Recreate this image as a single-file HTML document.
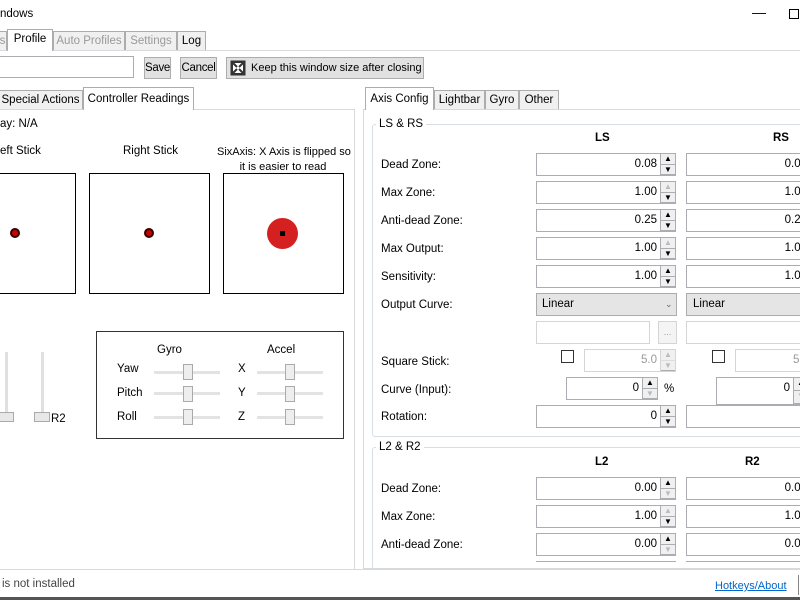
<!DOCTYPE html>
<html><head><meta charset="utf-8"><style>
*{box-sizing:border-box;margin:0;padding:0}
body{width:800px;height:600px;overflow:hidden;background:#fff;font-family:"Liberation Sans",sans-serif;font-size:11.5px;color:#000;position:relative}
.a{position:absolute}
.t{position:absolute;white-space:nowrap}
.tab{position:absolute;border:1px solid #acacac;border-bottom:none;background:#f0f0f0;text-align:center;line-height:19px;white-space:nowrap;overflow:hidden}
.sel{background:#fff;z-index:2}
.btn{position:absolute;border:1px solid #adadad;background:#e1e1e1;text-align:center;line-height:20px;white-space:nowrap;overflow:hidden}
.in{position:absolute;border:1px solid #abadb3;background:#fff;text-align:right;padding-right:3px;line-height:21px;white-space:nowrap;overflow:hidden}
.sp{position:absolute;width:16px;border:1px solid #abadb3;background:#f0f0f0}
.sp i{display:block;height:50%;border-bottom:1px solid #abadb3;font-style:normal;font-size:8px;line-height:10px;text-align:center}
.dis{color:#999}
.box{position:absolute;border:1px solid #000}
</style></head><body>
<div class="t" style="left:0;top:8px">ndows</div>
<div class="t" style="left:752px;top:4px;font-size:14px">—</div>
<div class="a" style="left:789px;top:9px;width:10px;height:10px;border:1px solid #000"></div>

<div class="a" style="left:0;top:50px;width:800px;height:1px;background:#d9d9d9"></div>
<div class="tab dis" style="left:-2px;top:31px;width:9px;height:19px">s</div>
<div class="tab sel" style="left:7px;top:29px;width:46px;height:22px">Profile</div>
<div class="tab dis" style="left:53px;top:31px;width:72px;height:19px">Auto Profiles</div>
<div class="tab dis" style="left:125px;top:31px;width:52px;height:19px">Settings</div>
<div class="tab" style="left:177px;top:31px;width:29px;height:19px">Log</div>

<div class="in" style="left:-2px;top:56px;width:136px;height:22px"></div>
<div class="btn" style="left:144px;top:57px;width:27px;height:22px;letter-spacing:-0.3px">Save</div>
<div class="btn" style="left:180px;top:57px;width:37px;height:22px;letter-spacing:-0.3px">Cancel</div>
<div class="btn" style="left:226px;top:57px;width:198px;height:22px;text-align:left;padding-left:24px;font-size:11px">Keep this window size after closing
<svg class="a" style="left:3px;top:2px" width="16" height="16"><rect x="0.5" y="0.5" width="15" height="15" fill="#333"/><rect x="3" y="3" width="10" height="10" fill="#fff"/><path d="M3 3l4 4M13 3l-4 4M3 13l4-4M13 13l-4-4" stroke="#333" stroke-width="2"/></svg></div>

<!-- left panel -->
<div class="a" style="left:-2px;top:109px;width:357px;height:462px;border:1px solid #d9d9d9"></div>
<div class="tab" style="left:-2px;top:90px;width:85px;height:19px">Special Actions</div>
<div class="tab sel" style="left:83px;top:87px;width:111px;height:23px;line-height:22px">Controller Readings</div>
<div class="t" style="left:0;top:118px">ay: N/A</div>
<div class="t" style="left:0;top:145px">eft Stick</div>
<div class="t" style="left:123px;top:145px">Right Stick</div>
<div class="t" style="left:217px;top:145px;width:132px;text-align:center;line-height:15px;font-size:11px">SixAxis: X Axis is flipped so<br>it is easier to read</div>
<div class="box" style="left:-2px;top:173px;width:78px;height:121px"></div>
<div class="box" style="left:89px;top:173px;width:121px;height:121px"></div>
<div class="box" style="left:223px;top:173px;width:121px;height:121px"></div>
<div class="a" style="left:10px;top:228px;width:10px;height:10px;border-radius:50%;background:#c00;border:2.5px solid #300"></div>
<div class="a" style="left:144px;top:228px;width:10px;height:10px;border-radius:50%;background:#c00;border:2.5px solid #300"></div>
<div class="a" style="left:267px;top:218px;width:31px;height:31px;border-radius:50%;background:#d42020"></div>
<div class="a" style="left:280px;top:231px;width:5px;height:5px;background:#000"></div>

<div class="a" style="left:5px;top:352px;width:3px;height:66px;background:#e0e0e0"></div>
<div class="a" style="left:-2px;top:412px;width:16px;height:10px;background:#e8e8e8;border:1px solid #aaa"></div>
<div class="a" style="left:41px;top:352px;width:3px;height:66px;background:#e0e0e0"></div>
<div class="a" style="left:34px;top:412px;width:16px;height:10px;background:#e8e8e8;border:1px solid #aaa"></div>
<div class="t" style="left:51px;top:413px">R2</div>

<div class="a" style="left:96px;top:331px;width:248px;height:108px;border:1.5px solid #333"></div>
<div class="t" style="left:157px;top:344px">Gyro</div>
<div class="t" style="left:267px;top:344px">Accel</div>
<div class="t" style="left:117px;top:363px">Yaw</div>
<div class="t" style="left:117px;top:387px">Pitch</div>
<div class="t" style="left:117px;top:411px">Roll</div>
<div class="t" style="left:238px;top:363px">X</div>
<div class="t" style="left:238px;top:387px">Y</div>
<div class="t" style="left:238px;top:411px">Z</div>
<div class="a" style="left:154px;top:371px;width:66px;height:3px;background:#e3e3e3"></div>
<div class="a" style="left:154px;top:392px;width:66px;height:3px;background:#e3e3e3"></div>
<div class="a" style="left:154px;top:416px;width:66px;height:3px;background:#e3e3e3"></div>
<div class="a" style="left:257px;top:371px;width:66px;height:3px;background:#e3e3e3"></div>
<div class="a" style="left:257px;top:392px;width:66px;height:3px;background:#e3e3e3"></div>
<div class="a" style="left:257px;top:416px;width:66px;height:3px;background:#e3e3e3"></div>
<div class="a" style="left:183px;top:364px;width:10px;height:16px;background:#eee;border:1px solid #aaa"></div>
<div class="a" style="left:183px;top:386px;width:10px;height:16px;background:#eee;border:1px solid #aaa"></div>
<div class="a" style="left:183px;top:409px;width:10px;height:16px;background:#eee;border:1px solid #aaa"></div>
<div class="a" style="left:285px;top:364px;width:10px;height:16px;background:#eee;border:1px solid #aaa"></div>
<div class="a" style="left:285px;top:386px;width:10px;height:16px;background:#eee;border:1px solid #aaa"></div>
<div class="a" style="left:285px;top:409px;width:10px;height:16px;background:#eee;border:1px solid #aaa"></div>

<!-- right panel -->
<div class="a" style="left:363px;top:109px;width:440px;height:460px;border:1px solid #d9d9d9"></div>
<div class="tab sel" style="left:365px;top:87px;width:69px;height:23px;line-height:22px">Axis Config</div>
<div class="tab" style="left:434px;top:90px;width:51px;height:19px">Lightbar</div>
<div class="tab" style="left:485px;top:90px;width:34px;height:19px">Gyro</div>
<div class="tab" style="left:519px;top:90px;width:40px;height:19px">Other</div>

<div class="a" style="left:372px;top:124px;width:430px;height:313px;border:1px solid #d5dfe5;border-radius:3px"></div>
<div class="t" style="left:376px;top:118px;background:#fff;padding:0 3px">LS &amp; RS</div>
<div class="t" style="left:595px;top:132px;font-weight:bold">LS</div>
<div class="t" style="left:773px;top:132px;font-weight:bold">RS</div>

<div class="t" style="left:381px;top:159px">Dead Zone:</div>
<div class="t" style="left:381px;top:187px">Max Zone:</div>
<div class="t" style="left:381px;top:215px">Anti-dead Zone:</div>
<div class="t" style="left:381px;top:243px">Max Output:</div>
<div class="t" style="left:381px;top:271px">Sensitivity:</div>
<div class="t" style="left:381px;top:299px">Output Curve:</div>
<div class="t" style="left:381px;top:356px">Square Stick:</div>
<div class="t" style="left:381px;top:384px">Curve (Input):</div>
<div class="t" style="left:381px;top:411px">Rotation:</div>

<div class="in" style="left:536px;top:153px;width:125px;height:23px">0.08</div><div class="sp" style="left:660px;top:153px;height:23px"><i>▲</i><i>▼</i></div>
<div class="in" style="left:536px;top:181px;width:125px;height:23px">1.00</div><div class="sp" style="left:660px;top:181px;height:23px"><i style="color:#bbb">▲</i><i>▼</i></div>
<div class="in" style="left:536px;top:209px;width:125px;height:23px">0.25</div><div class="sp" style="left:660px;top:209px;height:23px"><i>▲</i><i>▼</i></div>
<div class="in" style="left:536px;top:237px;width:125px;height:23px">1.00</div><div class="sp" style="left:660px;top:237px;height:23px"><i style="color:#bbb">▲</i><i>▼</i></div>
<div class="in" style="left:536px;top:265px;width:125px;height:23px">1.00</div><div class="sp" style="left:660px;top:265px;height:23px"><i>▲</i><i>▼</i></div>
<div class="in" style="left:686px;top:153px;width:125px;height:23px">0.08</div>
<div class="in" style="left:686px;top:181px;width:125px;height:23px">1.00</div>
<div class="in" style="left:686px;top:209px;width:125px;height:23px">0.25</div>
<div class="in" style="left:686px;top:237px;width:125px;height:23px">1.00</div>
<div class="in" style="left:686px;top:265px;width:125px;height:23px">1.00</div>

<div class="btn" style="left:536px;top:293px;width:141px;height:23px;text-align:left;padding-left:5px;background:#e5e5e5;border-color:#acacac">Linear<span class="a" style="left:128px;top:0;font-size:9px;color:#666">⌄</span></div>
<div class="btn" style="left:686px;top:293px;width:120px;height:23px;text-align:left;padding-left:6px;background:#e5e5e5;border-color:#acacac">Linear</div>
<div class="in" style="left:536px;top:321px;width:114px;height:23px;border-color:#d5d5d5"></div>
<div class="a" style="left:658px;top:321px;width:19px;height:23px;border:1px solid #d5d5d5;background:#f4f4f4;color:#999;font-size:9px;text-align:center;line-height:20px">...</div>
<div class="in" style="left:686px;top:321px;width:120px;height:23px;border-color:#d5d5d5"></div>

<div class="a" style="left:561px;top:350px;width:13px;height:13px;border:1px solid #333"></div>
<div class="in dis" style="left:584px;top:349px;width:77px;height:23px;border-color:#d5d5d5">5.0</div><div class="sp" style="left:660px;top:349px;height:23px;border-color:#d5d5d5;color:#bbb"><i style="border-color:#ddd">▲</i><i>▼</i></div>
<div class="a" style="left:712px;top:350px;width:13px;height:13px;border:1px solid #333"></div>
<div class="in dis" style="left:735px;top:349px;width:78px;height:23px;border-color:#d5d5d5">5.0</div>

<div class="in" style="left:566px;top:377px;width:77px;height:23px">0</div><div class="sp" style="left:642px;top:377px;height:23px"><i>▲</i><i style="color:#bbb">▼</i></div>
<div class="t" style="left:664px;top:383px">%</div>
<div class="in" style="left:716px;top:377px;width:78px;height:28px">0</div><div class="sp" style="left:793px;top:377px;height:28px"><i>▲</i><i style="color:#bbb">▼</i></div>
<div class="in" style="left:536px;top:405px;width:125px;height:23px">0</div><div class="sp" style="left:660px;top:405px;height:23px"><i>▲</i><i>▼</i></div>
<div class="in" style="left:686px;top:405px;width:120px;height:23px"></div>

<div class="a" style="left:372px;top:447px;width:430px;height:130px;border:1px solid #d5dfe5;border-radius:3px"></div>
<div class="t" style="left:376px;top:441px;background:#fff;padding:0 3px">L2 &amp; R2</div>
<div class="t" style="left:595px;top:456px;font-weight:bold">L2</div>
<div class="t" style="left:745px;top:456px;font-weight:bold">R2</div>
<div class="t" style="left:381px;top:483px">Dead Zone:</div>
<div class="t" style="left:381px;top:511px">Max Zone:</div>
<div class="t" style="left:381px;top:539px">Anti-dead Zone:</div>
<div class="in" style="left:536px;top:477px;width:125px;height:23px">0.00</div><div class="sp" style="left:660px;top:477px;height:23px"><i>▲</i><i style="color:#bbb">▼</i></div>
<div class="in" style="left:536px;top:505px;width:125px;height:23px">1.00</div><div class="sp" style="left:660px;top:505px;height:23px"><i style="color:#bbb">▲</i><i>▼</i></div>
<div class="in" style="left:536px;top:533px;width:125px;height:23px">0.00</div><div class="sp" style="left:660px;top:533px;height:23px"><i>▲</i><i style="color:#bbb">▼</i></div>
<div class="in" style="left:686px;top:477px;width:125px;height:23px">0.00</div>
<div class="in" style="left:686px;top:505px;width:125px;height:23px">1.00</div>
<div class="in" style="left:686px;top:533px;width:125px;height:23px">0.00</div>
<div class="a" style="left:536px;top:561px;width:140px;height:1px;background:#abadb3"></div>
<div class="a" style="left:686px;top:561px;width:120px;height:1px;background:#abadb3"></div>

<!-- status -->
<div class="a" style="left:0;top:569px;width:800px;height:31px;background:#fff;border-top:1px solid #d9d9d9;z-index:5"></div>
<div class="t" style="left:2px;top:578px;z-index:6;color:#444">is not installed</div>
<div class="t" style="left:715px;top:580px;z-index:6;color:#0066cc;text-decoration:underline;font-size:11px">Hotkeys/About</div>
<div class="a" style="left:798px;top:575px;width:1px;height:20px;background:#888;z-index:6"></div>
<div class="a" style="left:0;top:597px;width:800px;height:3px;background:#555;z-index:6"></div>
</body></html>
